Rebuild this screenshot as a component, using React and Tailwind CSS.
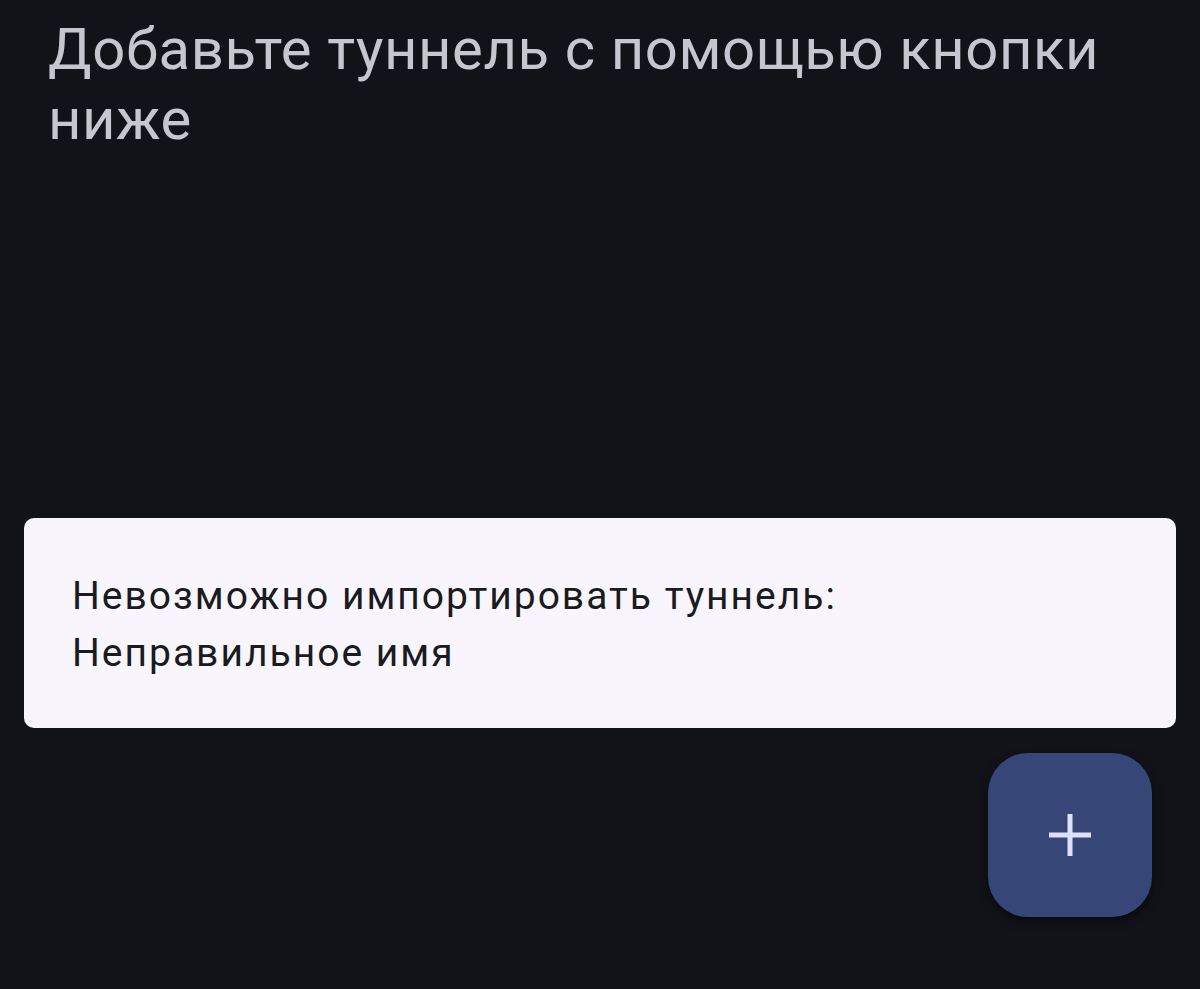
export default function App() {
  return (
    <div
      className="w-[1200px] h-[989px] overflow-hidden bg-[#121318] flex flex-col"
      style={{ fontFamily: 'Roboto, "Noto Sans", sans-serif' }}
    >
      <h1 className="pl-12 pr-8 pt-[14px] text-[58px] leading-[70px] tracking-[0.6px] font-normal text-[#c6c6d0]">
        Добавьте туннель с помощью кнопки ниже
      </h1>

      <div className="mt-[364px] mx-6 rounded-[10px] bg-[#f8f6fc] px-12 pt-[50px] pb-[46px]">
        <p className="text-[39px] leading-[57px] tracking-[2px] text-[#1a1b20]">
          Невозможно импортировать туннель:
          <br />
          Неправильное имя
        </p>
      </div>

      <div className="flex justify-end pr-12 mt-[25px]">
        <button className="w-[164px] h-[164px] rounded-[40px] bg-[#354677] flex items-center justify-center shadow-[0_4px_10px_rgba(0,0,0,0.5)]">
          <svg width="44" height="44" viewBox="0 0 44 44" fill="none">
            <path d="M22 1v42M1 22h42" stroke="#dde1f9" strokeWidth="5" />
          </svg>
        </button>
      </div>
    </div>
  );
}
